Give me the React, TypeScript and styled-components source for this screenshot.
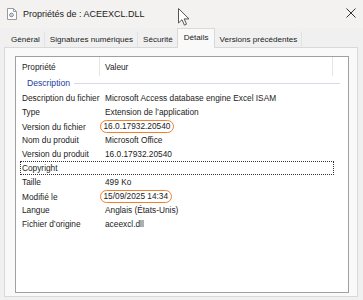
import React from "react";
import styled, { createGlobalStyle } from "styled-components";

const Global = createGlobalStyle`
  html, body { margin: 0; padding: 0; }
  body {
    width: 363px; height: 300px; overflow: hidden;
    background: #f0f0f0;
    font-family: "Liberation Sans", Arial, sans-serif;
    color: #1a1a1a;
  }
`;

const Window = styled.div`
  position: relative;
  width: 363px;
  height: 300px;
  display: flex;
  flex-direction: column;
  background: #f0f0f0;
`;

const TitleBar = styled.div`
  height: 28px;
  display: flex;
  align-items: center;
  padding: 0 6px 0 7px;
  background: #f3f2f1;
  flex: none;
`;

const Title = styled.span`
  margin-left: 6px;
  font-size: 9px;
  color: #1b1b1b;
  flex: 1;
`;

const Close = styled.span`
  width: 12px;
  height: 12px;
  display: flex;
  align-items: center;
  justify-content: center;
  margin-top: -3px;
`;

const TabStrip = styled.div`
  height: 19px;
  display: flex;
  align-items: flex-end;
  padding-left: 6px;
  flex: none;
`;

const Tab = styled.div<{ $active?: boolean }>`
  height: ${(p) => (p.$active ? 16 : 14)}px;
  padding: 0 ${(p) => (p.$active ? 6 : 4)}px;
  margin: ${(p) => (p.$active ? "0 -1px -1px" : "0")};
  display: flex;
  align-items: center;
  font-size: 8.1px;
  color: #1b1b1b;
  background: ${(p) => (p.$active ? "#f9f9f9" : "#f0f0f0")};
  border: 1px solid ${(p) => (p.$active ? "#d9d9d9" : "transparent")};
  border-bottom: ${(p) => (p.$active ? "none" : "1px solid transparent")};
  border-right: 1px solid ${(p) => (p.$active ? "#d9d9d9" : "#e2e2e2")};
  position: relative;
  z-index: ${(p) => (p.$active ? 1 : 0)};
  padding-bottom: ${(p) => (p.$active ? 3 : 0)}px;
`;

const Panel = styled.div`
  flex: 1;
  margin: 0 5px 3px 4px;
  background: #f9f9f9;
  border: 1px solid #d9d9d9;
  padding: 8px 8px 3px 10px;
  display: flex;
`;

const ListBox = styled.div`
  flex: 1;
  background: #ffffff;
  border: 1px solid #a0a0a0;
  display: flex;
  flex-direction: column;
  font-size: 8.3px;
  color: #1b1b1b;
`;

const Header = styled.div`
  height: 19px;
  display: grid;
  grid-template-columns: 84px 233px 1fr;
  align-items: stretch;
  flex: none;
`;

const HeadCell = styled.div<{ $pad: number }>`
  display: flex;
  align-items: center;
  padding-left: ${(p) => p.$pad}px;
  border-right: 1px solid #e5e5e5;
  &:last-child { border-right: none; }
`;

const Group = styled.div`
  height: 14px;
  display: flex;
  align-items: center;
  padding: 0 8px 1px 11px;
  flex: none;
`;

const GroupLabel = styled.span`
  color: #1e3ca0;
  font-size: 8.6px;
  margin-right: 4px;
`;

const GroupLine = styled.span`
  flex: 1;
  height: 1px;
  background: #d5dbe8;
`;

const Row = styled.div<{ $focus?: boolean }>`
  height: 14px;
  display: grid;
  grid-template-columns: 84px 1fr;
  align-items: center;
  margin: 0 14px 0 4px;
  border: 1px dotted ${(p) => (p.$focus ? "#333" : "transparent")};
  box-sizing: border-box;
`;

const Cell = styled.span<{ $pad: number }>`
  padding-left: ${(p) => p.$pad}px;
  white-space: nowrap;
`;

const Highlight = styled.span`
  display: inline-block;
  margin-left: -5px;
  padding: 0 3px 0 2.5px;
  height: 11px;
  line-height: 11px;
  border: 1.5px solid #f0802e;
  border-radius: 8px;
`;

const Cursor = styled.svg`
  position: absolute;
  left: 178px;
  top: 8px;
`;

const FileIcon = () => (
  <svg width="10" height="12" viewBox="0 0 10 12">
    <path d="M0.5 0.5h6l3 3v8h-9z" fill="#fff" stroke="#9a9a9a" />
    <path d="M6.5 0.5v3h3" fill="none" stroke="#9a9a9a" />
    <circle cx="4.5" cy="7" r="1.8" fill="none" stroke="#6b7c93" strokeWidth="1" />
    <circle cx="4.5" cy="7" r="0.5" fill="#6b7c93" />
  </svg>
);

type Item = { k: string; v: string; hl?: boolean; focus?: boolean };

const items: Item[] = [
  { k: "Description du fichier", v: "Microsoft Access database engine Excel ISAM" },
  { k: "Type", v: "Extension de l\u2019application" },
  { k: "Version du fichier", v: "16.0.17932.20540", hl: true },
  { k: "Nom du produit", v: "Microsoft Office" },
  { k: "Version du produit", v: "16.0.17932.20540" },
  { k: "Copyright", v: "", focus: true },
  { k: "Taille", v: "499 Ko" },
  { k: "Modifi\u00e9 le", v: "15/09/2025 14:34", hl: true },
  { k: "Langue", v: "Anglais (\u00c9tats-Unis)" },
  { k: "Fichier d\u2019origine", v: "aceexcl.dll" },
];

const tabs = ["G\u00e9n\u00e9ral", "Signatures num\u00e9riques", "S\u00e9curit\u00e9", "D\u00e9tails", "Versions pr\u00e9c\u00e9dentes"];

export default function App() {
  return (
    <Window>
      <Global />
      <TitleBar>
        <FileIcon />
        <Title>Propriétés de : ACEEXCL.DLL</Title>
        <Close>
          <svg width="10" height="10" viewBox="0 0 10 10">
            <path d="M0.5 0.5l9 9M9.5 0.5l-9 9" stroke="#333" strokeWidth="1" />
          </svg>
        </Close>
      </TitleBar>
      <TabStrip>
        {tabs.map((t) => (
          <Tab key={t} $active={t === "D\u00e9tails"}>
            {t}
          </Tab>
        ))}
      </TabStrip>
      <Panel>
        <ListBox>
          <Header>
            <HeadCell $pad={6}>Propriété</HeadCell>
            <HeadCell $pad={5}>Valeur</HeadCell>
            <HeadCell $pad={0} />
          </Header>
          <Group>
            <GroupLabel>Description</GroupLabel>
            <GroupLine />
          </Group>
          {items.map((it) => (
            <Row key={it.k} $focus={it.focus}>
              <Cell $pad={1}>{it.k}</Cell>
              <Cell $pad={0}>{it.hl ? <Highlight>{it.v}</Highlight> : it.v}</Cell>
            </Row>
          ))}
        </ListBox>
      </Panel>
      <Cursor width="12" height="18" viewBox="0 0 12 18">
        <path d="M0.5 0.5v14.5l3.5-3.3 2.4 5.4 2.1-0.9-2.3-5.3h4.8z" fill="#fff" stroke="#555" strokeWidth="1" strokeLinejoin="round" />
      </Cursor>
    </Window>
  );
}
